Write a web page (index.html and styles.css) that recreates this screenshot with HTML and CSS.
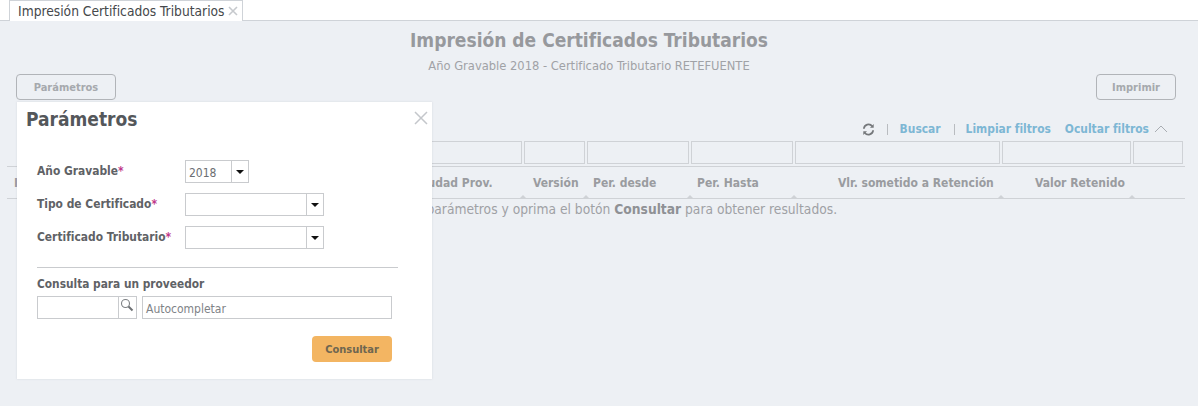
FILE: index.html
```html
<!DOCTYPE html>
<html lang="es">
<head>
<meta charset="utf-8">
<title>Impresión de Certificados Tributarios</title>
<link rel="stylesheet" href="styles.css">
</head>
<body>
<nav class="tabs">
  <div class="tab"><span>Impresión Certificados Tributarios</span><svg class="tab-x" width="10" height="10" viewBox="0 0 10 10"><path d="M1 1l8 8M9 1l-8 8" stroke="#c6c9cd" stroke-width="1.6" fill="none"/></svg></div>
</nav>
<main class="page">
  <h1 class="title">Impresión de Certificados Tributarios</h1>
  <p class="subtitle">Año Gravable 2018 - Certificado Tributario RETEFUENTE</p>
  <div class="btn-row">
    <button class="btn btn-params">Parámetros</button>
    <button class="btn btn-print">Imprimir</button>
  </div>
  <div class="actions">
    <svg class="refresh" width="13" height="13" viewBox="0 0 14 14"><path d="M2 6.2A5 5 0 0 1 11 3.6M12 7.8A5 5 0 0 1 3 10.4" stroke="#75787b" stroke-width="1.9" fill="none"/><path d="M12.6 1.2v4h-4zM1.4 12.8v-4h4z" fill="#75787b"/></svg>
    <span class="sep"></span>
    <a class="link link-search">Buscar</a>
    <span class="sep"></span>
    <a class="link link-clear">Limpiar filtros</a>
    <a class="link link-hide">Ocultar filtros</a>
    <svg class="chev" width="14" height="8" viewBox="0 0 14 8"><path d="M1 7l6-6 6 6" stroke="#a9adb2" stroke-width="1" fill="none"/></svg>
  </div>
  <div class="filters">
    <span class="fb fb-a"></span><span class="fb fb-b"></span><span class="fb fb-c"></span><span class="fb fb-c"></span><span class="fb fb-d"></span><span class="fb fb-e"></span><span class="fb fb-f"></span>
  </div>
  <div class="heads">
    <span class="h h-first">I</span>
    <span class="h h-prov">Ciudad Prov.</span>
    <span class="h h-ver">Versión</span>
    <span class="h h-left">Per. desde</span>
    <span class="h h-left">Per. Hasta</span>
    <span class="h h-vlr">Vlr. sometido a Retención</span>
    <span class="h h-val">Valor Retenido</span>
  </div>
  <p class="message">Seleccione los parámetros y oprima el botón <b>Consultar</b> para obtener resultados.</p>
</main>

<section class="dialog">
  <h2 class="d-title">Parámetros</h2>
  <svg class="d-close" width="14" height="14" viewBox="0 0 14 14"><path d="M1 1l12 12M13 1L1 13" stroke="#c4c7cb" stroke-width="1.5" fill="none"/></svg>
  <div class="form">
    <label class="lbl">Año Gravable<i>*</i></label>
    <div class="combo combo-s"><span class="val">2018</span><span class="arrow"></span></div>
    <label class="lbl">Tipo de Certificado<i>*</i></label>
    <div class="combo combo-l"><span class="val"></span><span class="arrow"></span></div>
    <label class="lbl">Certificado Tributario<i>*</i></label>
    <div class="combo combo-l"><span class="val"></span><span class="arrow"></span></div>
  </div>
  <hr class="rule">
  <div class="sub">Consulta para un proveedor</div>
  <div class="prov">
    <div class="search"><span class="s-in"></span><span class="s-btn"><svg width="14" height="14" viewBox="0 0 14 14"><circle cx="5.5" cy="5.5" r="4" stroke="#7d8084" stroke-width="1.1" fill="none"/><path d="M8.5 8.5l4 4" stroke="#6d7073" stroke-width="2"/></svg></span></div>
    <div class="auto">Autocompletar</div>
  </div>
  <div class="d-foot"><button class="consult">Consultar</button></div>
</section>
</body>
</html>
```
FILE: styles.css
```css
* { box-sizing: border-box; }
html, body { margin: 0; height: 100%; }
body {
  position: relative;
  width: 1198px;
  height: 406px;
  overflow: hidden;
  background: #edf0f4;
  font-family: "DejaVu Sans Condensed", "DejaVu Sans", sans-serif;
  font-stretch: condensed;
  font-size: 12px;
  color: #97999d;
}
.tabs {
  height: 21px;
  background: #fff;
  border-bottom: 1px solid #cfd3d8;
  padding-left: 9px;
  margin-bottom: -1px;
}
.tab {
  display: inline-flex;
  align-items: center;
  width: 234px;
  height: 21px;
  background: #fff;
  border: 1px solid #cfd3d8;
  border-bottom: 0;
  padding: 0 0 1px 8px;
  font-size: 13.7px;
  color: #45484b;
  white-space: nowrap;
}
.tab-x { margin-left: 3px; }
.page { padding-top: 8px; }
.title {
  margin: 0;
  padding-right: 20px;
  text-align: center;
  font-size: 19px;
  line-height: 24px;
  font-weight: 700;
  color: #97999d;
}
.subtitle {
  margin: 7px 0 0;
  padding-right: 20px;
  text-align: center;
  font-size: 12.8px;
  line-height: 14px;
  color: #a0a2a6;
}
.btn-row {
  display: flex;
  justify-content: space-between;
  margin-top: 1px;
  padding: 0 22px 0 16px;
}
.btn {
  height: 26px;
  background: transparent;
  border: 1px solid #b1b4b8;
  border-radius: 4px;
  font: inherit;
  font-stretch: condensed;
  font-size: 11px;
  font-weight: 700;
  color: #a6a9ad;
  padding: 0;
}
.btn-params { width: 100px; }
.btn-print { width: 80px; }
.actions {
  display: flex;
  align-items: center;
  justify-content: flex-end;
  height: 16px;
  margin-top: 21px;
  padding-right: 30px;
  font-size: 11.9px;
  font-weight: 700;
}
.refresh { margin-right: 12px; }
.sep { width: 1px; height: 11px; background: #b9bcc0; }
.link { color: #7db7d4; white-space: nowrap; }
.link-search { margin: 0 13px 0 12px; }
.link-clear { margin-left: 11px; }
.link-hide { margin-left: 14px; }
.chev { margin-left: 5px; }
.filters {
  display: flex;
  gap: 2px;
  margin: 4px 0 0 322px;
  height: 25px;
}
.fb { height: 23px; border: 1px solid #cfd2d6; flex: none; }
.fb-a { width: 200px; }
.fb-b { width: 61px; }
.fb-c { width: 102px; }
.fb-d { width: 205px; }
.fb-e { width: 129px; }
.fb-f { width: 50px; }
.heads {
  display: flex;
  width: 1178px;
  height: 33px;
  margin-left: 7px;
  border-top: 1px solid #cfd2d6;
  border-bottom: 1px solid #cfd2d6;
  font-size: 12px;
  font-weight: 700;
  color: #9a9ca0;
}
.h { display: block; position: relative; white-space: nowrap; flex: none; height: 100%; line-height: 33px; }
.h::after {
  content: "";
  position: absolute;
  right: -2px;
  bottom: 0;
  border: 3px solid transparent;
  border-top: 0;
  border-bottom-color: #cfd2d6;
}
.h-first { width: 286px; padding-left: 7px; }
.h-first::after { display: none; }
.h-prov { width: 231px; padding-left: 123px; }
.h-ver { width: 63px; padding-left: 9px; }
.h-left { width: 104px; padding-left: 6px; }
.h-vlr { width: 207px; padding-left: 43px; }
.h-val { width: 131px; padding-left: 33px; }
.message {
  margin: 2px 0 0 335px;
  font-size: 13.7px;
  line-height: 16px;
  color: #9fa1a5;
  white-space: nowrap;
}
.message b { color: #8f9195; }

.dialog {
  position: absolute;
  left: 17px;
  top: 102px;
  width: 415px;
  height: 277px;
  background: #fff;
  box-shadow: 0 0 2px rgba(120,130,140,.2);
  padding: 6px 20px 0;
  color: #5c5f63;
}
.d-title {
  margin: 0 0 0 -11px;
  font-size: 19px;
  line-height: 23px;
  font-weight: 700;
  color: #54575b;
}
.d-close { position: absolute; right: 4px; top: 9px; }
.form {
  display: grid;
  grid-template-columns: 148px auto;
  justify-content: start;
  align-items: center;
  row-gap: 10px;
  margin-top: 29px;
}
.lbl { font-size: 11.9px; font-weight: 700; color: #5f6266; white-space: nowrap; padding-bottom: 2px; }
.lbl i { font-style: normal; color: #c0398a; }
.combo { display: flex; background: #fff; border: 1px solid #c9cbce; }
.combo-s { width: 64px; height: 23px; }
.combo-l { width: 139px; height: 23px; }
.val { flex: 1; font-size: 12px; line-height: 24px; padding-left: 3px; color: #6b6e72; border-right: 1px solid #c9cbce; }
.arrow { width: 16px; position: relative; }
.arrow::after {
  content: "";
  position: absolute;
  left: 4px;
  top: 9px;
  border: 4px solid transparent;
  border-top: 4px solid #111;
  border-bottom: 0;
}
.rule { margin: 18px 14px 0 0; border: 0; border-top: 1px solid #c9cbce; }
.sub { margin-top: 9px; font-size: 11.8px; line-height: 15px; font-weight: 700; color: #5f6266; }
.prov { display: flex; margin-top: 4px; gap: 5px; }
.search { display: flex; width: 100px; height: 23px; border: 1px solid #c9cbce; }
.s-in { flex: 1; border-right: 1px solid #c9cbce; }
.s-btn { width: 17px; line-height: 0; padding: 1px 0 0 1px; }
.auto { width: 250px; height: 23px; border: 1px solid #c9cbce; padding-left: 3px; font-size: 12px; line-height: 24px; color: #808387; }
.d-foot { display: flex; justify-content: flex-end; margin-top: 17px; padding-right: 20px; }
.consult {
  width: 80px;
  height: 26px;
  border: 0;
  border-radius: 4px;
  background: #f3b562;
  font: inherit;
  font-stretch: condensed;
  font-size: 11px;
  font-weight: 700;
  color: #6f6650;
  padding: 0;
}
```
